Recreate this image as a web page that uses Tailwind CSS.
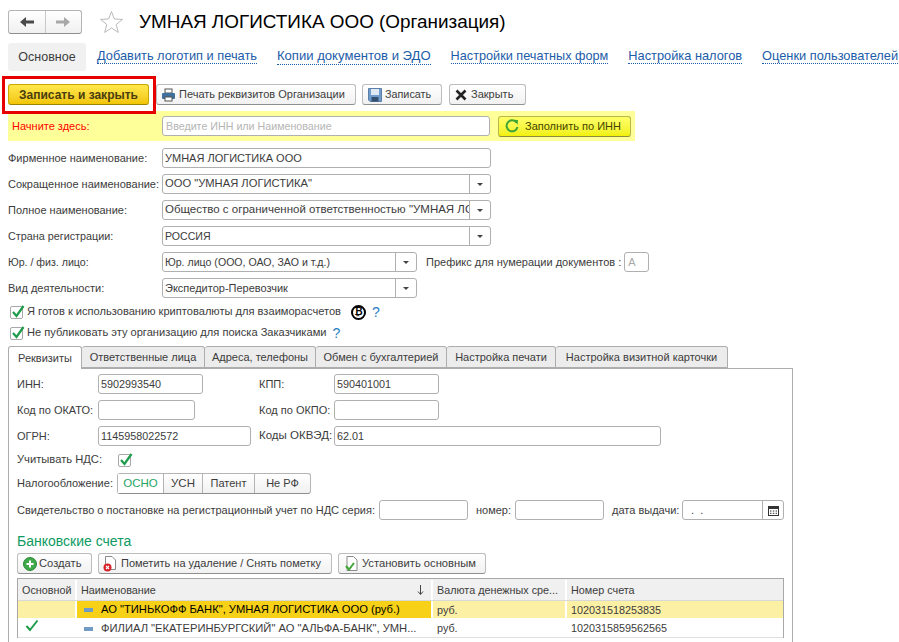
<!DOCTYPE html>
<html lang="ru">
<head>
<meta charset="utf-8">
<script src="https://cdn.jsdelivr.net/npm/@tailwindcss/browser@4"></script>
</head>
<body class="bg-white">
<div class="relative w-[899px] h-[642px] overflow-hidden bg-white font-['Liberation_Sans',Arial,sans-serif] text-[11px] leading-none text-[#3c3c3c]">

  <!-- Title bar -->
  <div class="flex items-center h-[43px] pl-[8px] pt-[1px]">
    <div class="flex w-[74px] h-[24px] rounded-[3px] border border-[#b4b4b4] border-b-[#8f8f8f] bg-gradient-to-b from-white to-[#f0f0f0]">
      <div class="flex-1 flex items-center justify-center border-r border-[#c8c8c8]">
        <svg width="16" height="12" viewBox="0 0 16 12"><path d="M1 6 L7 1 V4.5 H15 V7.5 H7 V11 Z" fill="#4a4a4a"/></svg>
      </div>
      <div class="flex-1 flex items-center justify-center">
        <svg width="16" height="12" viewBox="0 0 16 12"><path d="M15 6 L9 1 V4.5 H1 V7.5 H9 V11 Z" fill="#a8a8a8"/></svg>
      </div>
    </div>
    <svg class="ml-[17px] shrink-0" width="25" height="24" viewBox="0 0 25 24"><path d="M12.5 1.5 L15.4 9 L23.5 9.4 L17.2 14.5 L19.3 22.4 L12.5 18 L5.7 22.4 L7.8 14.5 L1.5 9.4 L9.6 9 Z" fill="#fff" stroke="#b9b9b9" stroke-width="1"/></svg>
    <div class="ml-[15px] text-[18.9px] text-black whitespace-nowrap">УМНАЯ ЛОГИСТИКА ООО (Организация)</div>
  </div>

  <!-- Section tabs -->
  <div class="flex items-center h-[28px] pl-[8px] text-[12.8px] whitespace-nowrap">
    <div class="flex items-center justify-center w-[78px] h-[28px] rounded-[3px] bg-[#f1f1f1] text-[12.5px] text-[#3c3c3c]">Основное</div>
    <a class="ml-[11px] text-[#1c5ca8] border-b border-dotted border-[#1c5ca8] pb-[1px]">Добавить логотип и печать</a>
    <a class="ml-[20px] text-[13.1px] text-[#1c5ca8] border-b border-dotted border-[#1c5ca8] pb-[1px]">Копии документов и ЭДО</a>
    <a class="ml-[20px] text-[12.7px] text-[#1c5ca8] border-b border-dotted border-[#1c5ca8] pb-[1px]">Настройки печатных форм</a>
    <a class="ml-[20px] text-[#1c5ca8] border-b border-dotted border-[#1c5ca8] pb-[1px]">Настройка налогов</a>
    <a class="ml-[20px] text-[#1c5ca8] border-b border-dotted border-[#1c5ca8] pb-[1px]">Оценки пользователей</a>
  </div>

  <!-- Command bar -->
  <div class="flex items-center h-[21px] mt-[13px] ml-[8px]">
    <button class="flex items-center justify-center w-[141px] h-[21px] rounded-[3px] border border-[#c9a800] border-b-[#9c8500] bg-gradient-to-b from-[#ffe84a] to-[#f2c500] font-bold text-[#4a3d10] text-[12px]">Записать и закрыть</button>
    <button class="flex items-center gap-[3px] ml-[7px] w-[200px] h-[21px] pl-[4px] rounded-[3px] border border-[#bcbcbc] border-b-[#8f8f8f] bg-gradient-to-b from-white to-[#f1f1f1] whitespace-nowrap">
      <svg width="15" height="14" viewBox="0 0 15 14"><rect x="4" y="1" width="7" height="4" fill="#fff" stroke="#555"/><rect x="1" y="5" width="13" height="6" rx="1" fill="#3f6f9c"/><rect x="4" y="9" width="7" height="4" fill="#fff" stroke="#555"/></svg>
      <span>Печать реквизитов Организации</span>
    </button>
    <button class="flex items-center gap-[3px] ml-[6px] w-[80px] h-[21px] pl-[5px] rounded-[3px] border border-[#bcbcbc] border-b-[#8f8f8f] bg-gradient-to-b from-white to-[#f1f1f1]">
      <svg width="14" height="14" viewBox="0 0 14 14"><path d="M0.5 0.5 H13.5 V13.5 H2 L0.5 12 Z" fill="#6f9ccb" stroke="#5b7fa6"/><rect x="3" y="1" width="8" height="6" fill="#dfe9f3"/><rect x="3.5" y="9" width="7" height="4.5" fill="#33506f"/></svg>
      <span class="text-[10.8px]">Записать</span>
    </button>
    <button class="flex items-center gap-[4px] ml-[7px] w-[77px] h-[21px] pl-[5px] rounded-[3px] border border-[#bcbcbc] border-b-[#8f8f8f] bg-gradient-to-b from-white to-[#f1f1f1]">
      <svg width="12" height="12" viewBox="0 0 12 12"><path d="M1.5 1.5 L10.5 10.5 M10.5 1.5 L1.5 10.5" stroke="#222" stroke-width="2.6"/></svg>
      <span>Закрыть</span>
    </button>
  </div>

  <!-- Red highlight -->
  <div class="absolute left-[2px] top-[76px] w-[154px] h-[38px] border-[3px] border-[#e60000]"></div>

  <!-- Yellow strip -->
  <div class="flex items-center h-[30px] w-[627px] mt-[6px] ml-[8px] bg-[#ffff99]">
    <span class="w-[154px] pl-[4px] text-[#ff0000]">Начните здесь:</span>
    <div class="flex items-center w-[328px] h-[20px] px-[3px] rounded-[3px] border border-[#b0b0b0] bg-white text-[10.7px] text-[#b5b5b5]">Введите ИНН или Наименование</div>
    <button class="flex items-center gap-[6px] ml-[8px] w-[133px] h-[21px] pl-[6px] rounded-[3px] border border-[#b8b84a] border-b-[#8d8d3a] bg-gradient-to-b from-[#ffff66] to-[#f1f100] text-[#444400]">
      <svg width="14" height="14" viewBox="0 0 14 14"><path d="M11.5 3.5 A5.5 5.5 0 1 0 12.5 8" fill="none" stroke="#3fa535" stroke-width="2"/><path d="M8.5 0.8 L13 1 L12.6 5.8 Z" fill="#3fa535"/></svg>
      <span>Заполнить по ИНН</span>
    </button>
  </div>

  <!-- Main fields -->
  <div class="flex flex-col gap-[6px] mt-[7px] pl-[8px]">
    <div class="flex items-center h-[20px]">
      <span class="w-[154px] shrink-0">Фирменное наименование:</span>
      <div class="flex items-center w-[329px] h-[20px] px-[2px] rounded-[3px] border border-[#b0b0b0]">УМНАЯ ЛОГИСТИКА ООО</div>
    </div>
    <div class="flex items-center h-[20px]">
      <span class="w-[154px] shrink-0 whitespace-nowrap">Сокращенное наименование:</span>
      <div class="flex w-[329px] h-[20px] rounded-[3px] border border-[#b0b0b0]">
        <div class="flex-1 flex items-center px-[2px] text-[11.2px]">ООО "УМНАЯ ЛОГИСТИКА"</div>
        <div class="flex items-center justify-center w-[21px] border-l border-[#b0b0b0]"><svg width="6" height="3" viewBox="0 0 6 3"><path d="M0 0 H6 L3 3 Z" fill="#444"/></svg></div>
      </div>
    </div>
    <div class="flex items-center h-[20px]">
      <span class="w-[154px] shrink-0">Полное наименование:</span>
      <div class="flex w-[329px] h-[20px] rounded-[3px] border border-[#b0b0b0]">
        <div class="flex-1 min-w-0 flex items-center px-[2px] overflow-hidden whitespace-nowrap text-[11.5px]">Общество с ограниченной ответственностью "УМНАЯ ЛОГИСТИКА"</div>
        <div class="flex items-center justify-center w-[21px] shrink-0 border-l border-[#b0b0b0]"><svg width="6" height="3" viewBox="0 0 6 3"><path d="M0 0 H6 L3 3 Z" fill="#444"/></svg></div>
      </div>
    </div>
    <div class="flex items-center h-[20px]">
      <span class="w-[154px] shrink-0 text-[10.8px]">Страна регистрации:</span>
      <div class="flex w-[329px] h-[20px] rounded-[3px] border border-[#b0b0b0]">
        <div class="flex-1 flex items-center px-[2px] text-[10.6px]">РОССИЯ</div>
        <div class="flex items-center justify-center w-[21px] border-l border-[#b0b0b0]"><svg width="6" height="3" viewBox="0 0 6 3"><path d="M0 0 H6 L3 3 Z" fill="#444"/></svg></div>
      </div>
    </div>
    <div class="flex items-center h-[20px]">
      <span class="w-[154px] shrink-0 text-[10.6px]">Юр. / физ. лицо:</span>
      <div class="flex w-[255px] h-[20px] rounded-[3px] border border-[#b0b0b0]">
        <div class="flex-1 flex items-center px-[2px] text-[10.6px]">Юр. лицо (ООО, ОАО, ЗАО и т.д.)</div>
        <div class="flex items-center justify-center w-[21px] border-l border-[#b0b0b0]"><svg width="6" height="3" viewBox="0 0 6 3"><path d="M0 0 H6 L3 3 Z" fill="#444"/></svg></div>
      </div>
      <span class="ml-[9px] whitespace-nowrap">Префикс для нумерации документов :</span>
      <div class="flex items-center ml-[3px] w-[25px] h-[20px] px-[3px] rounded-[3px] border border-[#b0b0b0] text-[#a8a8a8]">А</div>
    </div>
    <div class="flex items-center h-[20px]">
      <span class="w-[154px] shrink-0">Вид деятельности:</span>
      <div class="flex w-[255px] h-[20px] rounded-[3px] border border-[#b0b0b0]">
        <div class="flex-1 flex items-center px-[2px]">Экспедитор-Перевозчик</div>
        <div class="flex items-center justify-center w-[21px] border-l border-[#b0b0b0]"><svg width="6" height="3" viewBox="0 0 6 3"><path d="M0 0 H6 L3 3 Z" fill="#444"/></svg></div>
      </div>
    </div>
  </div>

  <!-- Checkboxes -->
  <div class="flex items-center h-[16px] mt-[6px] pl-[10px]">
    <div class="relative w-[13px] h-[13px] rounded-[2px] border border-[#a8a8a8]">
      <svg class="absolute left-[0px] top-[-3px]" width="14" height="15" viewBox="0 0 14 15"><path d="M2 8 L5.5 12 L12.5 2" fill="none" stroke="#1d9b4a" stroke-width="2.2"/></svg>
    </div>
    <span class="ml-[4px] text-[11.1px]">Я готов к использованию криптовалюты для взаиморасчетов</span>
    <div class="flex items-center justify-center ml-[10px] w-[15px] h-[15px] rounded-full border-2 border-black text-[10px] font-bold text-black">₿</div>
    <span class="ml-[6px] text-[14px] text-[#2a7fc4]">?</span>
  </div>
  <div class="flex items-center h-[16px] mt-[5px] pl-[10px]">
    <div class="relative w-[13px] h-[13px] rounded-[2px] border border-[#a8a8a8]">
      <svg class="absolute left-[0px] top-[-3px]" width="14" height="15" viewBox="0 0 14 15"><path d="M2 8 L5.5 12 L12.5 2" fill="none" stroke="#1d9b4a" stroke-width="2.2"/></svg>
    </div>
    <span class="ml-[4px] text-[11.1px]">Не публиковать эту организацию для поиска Заказчиками</span>
    <span class="ml-[6px] text-[14px] text-[#2a7fc4]">?</span>
  </div>

  <!-- Inner tabs -->
  <div class="flex items-end h-[23px] mt-[4px] ml-[8px] whitespace-nowrap">
    <div class="relative z-10 flex items-center justify-center w-[74px] h-[23px] -mb-[1px] rounded-t-[3px] border border-b-0 border-[#adadad] bg-white">Реквизиты</div>
    <div class="flex items-center justify-center w-[123px] h-[22px] rounded-t-[3px] border border-l-0 border-[#adadad] bg-[#ececec]">Ответственные лица</div>
    <div class="flex items-center justify-center w-[111px] h-[22px] rounded-t-[3px] border border-l-0 border-[#adadad] bg-[#ececec]">Адреса, телефоны</div>
    <div class="flex items-center justify-center w-[131px] h-[22px] rounded-t-[3px] border border-l-0 border-[#adadad] bg-[#ececec]">Обмен с бухгалтерией</div>
    <div class="flex items-center justify-center w-[109px] h-[22px] rounded-t-[3px] border border-l-0 border-[#adadad] bg-[#ececec]">Настройка печати</div>
    <div class="flex items-center justify-center w-[172px] h-[22px] rounded-t-[3px] border border-l-0 border-[#adadad] bg-[#ececec]">Настройка визитной карточки</div>
  </div>

  <!-- Panel -->
  <div class="ml-[8px] w-[785px] h-[300px] border border-b-0 border-[#adadad] pl-[8px] pt-[5px]">
    <div class="flex flex-col gap-[6px]">
      <div class="flex items-center h-[20px]">
        <span class="w-[81px]">ИНН:</span>
        <div class="flex items-center w-[105px] h-[20px] px-[2px] rounded-[3px] border border-[#b0b0b0] text-[10.8px]">5902993540</div>
        <span class="ml-[56px] w-[75px]">КПП:</span>
        <div class="flex items-center w-[105px] h-[20px] px-[2px] rounded-[3px] border border-[#b0b0b0] text-[10.8px]">590401001</div>
      </div>
      <div class="flex items-center h-[20px]">
        <span class="w-[81px] whitespace-nowrap">Код по ОКАТО:</span>
        <div class="w-[97px] h-[20px] rounded-[3px] border border-[#b0b0b0]"></div>
        <span class="ml-[64px] w-[75px] whitespace-nowrap">Код по ОКПО:</span>
        <div class="w-[105px] h-[20px] rounded-[3px] border border-[#b0b0b0]"></div>
      </div>
      <div class="flex items-center h-[20px]">
        <span class="w-[81px]">ОГРН:</span>
        <div class="flex items-center w-[153px] h-[20px] px-[2px] rounded-[3px] border border-[#b0b0b0] text-[10.8px]">1145958022572</div>
        <span class="ml-[8px] w-[75px] whitespace-nowrap text-[11.5px]">Коды ОКВЭД:</span>
        <div class="flex items-center w-[327px] h-[20px] px-[2px] rounded-[3px] border border-[#b0b0b0] text-[10.8px]">62.01</div>
      </div>
    </div>
    <div class="flex items-center h-[16px] mt-[6px]">
      <span class="w-[101px] text-[11.2px]">Учитывать НДС:</span>
      <div class="relative w-[13px] h-[13px] rounded-[2px] border border-[#a8a8a8]">
        <svg class="absolute left-[0px] top-[-3px]" width="14" height="15" viewBox="0 0 14 15"><path d="M2 8 L5.5 12 L12.5 2" fill="none" stroke="#1d9b4a" stroke-width="2.2"/></svg>
      </div>
    </div>
    <div class="flex items-center h-[21px] mt-[5px]">
      <span class="w-[100px]">Налогообложение:</span>
      <div class="flex h-[21px] rounded-[3px] border border-[#b4b4b4] border-b-[#8f8f8f] bg-gradient-to-b from-white to-[#f1f1f1]">
        <div class="flex items-center justify-center w-[46px] bg-white text-[11.5px] text-[#1fa463] border-r border-[#b4b4b4]">ОСНО</div>
        <div class="flex items-center justify-center w-[39px] text-[11.5px] border-r border-[#b4b4b4]">УСН</div>
        <div class="flex items-center justify-center w-[52px] border-r border-[#b4b4b4]">Патент</div>
        <div class="flex items-center justify-center w-[55px]">Не РФ</div>
      </div>
    </div>
    <div class="flex items-center h-[20px] mt-[6px]">
      <span class="w-[362px] whitespace-nowrap">Свидетельство о постановке на регистрационный учет по НДС серия:</span>
      <div class="w-[89px] h-[20px] rounded-[3px] border border-[#b0b0b0]"></div>
      <span class="ml-[8px] w-[39px]">номер:</span>
      <div class="w-[89px] h-[20px] rounded-[3px] border border-[#b0b0b0]"></div>
      <span class="ml-[8px] w-[70px] whitespace-nowrap">дата выдачи:</span>
      <div class="flex w-[102px] h-[20px] rounded-[3px] border border-[#b0b0b0]">
        <div class="flex-1 flex items-center pl-[8px]">. &nbsp;.</div>
        <div class="flex items-center justify-center w-[21px] border-l border-[#b0b0b0]">
          <svg width="11" height="11" viewBox="0 0 11 11"><rect x="0.5" y="1.5" width="10" height="9" fill="#fff" stroke="#333"/><rect x="0.5" y="1.5" width="10" height="2.5" fill="#333"/><path d="M2 6 H3.5 M4.8 6 H6.3 M7.6 6 H9 M2 8.3 H3.5 M4.8 8.3 H6.3 M7.6 8.3 H9" stroke="#333"/></svg>
        </div>
      </div>
    </div>

    <div class="h-[14px] mt-[14px] text-[14px] text-[#0e9a63]">Банковские счета</div>

    <div class="flex items-center h-[21px] mt-[5px] whitespace-nowrap">
      <button class="flex items-center gap-[2px] w-[75px] h-[21px] pl-[5px] rounded-[3px] border border-[#bcbcbc] border-b-[#8f8f8f] bg-gradient-to-b from-white to-[#f1f1f1]">
        <svg width="14" height="14" viewBox="0 0 14 14"><circle cx="7" cy="7" r="6.5" fill="#3fa84a" stroke="#2d8a38"/><path d="M7 3.5 V10.5 M3.5 7 H10.5" stroke="#fff" stroke-width="2"/></svg>
        <span class="text-[11.2px]">Создать</span>
      </button>
      <button class="flex items-center gap-[4px] ml-[6px] w-[234px] h-[21px] pl-[4px] rounded-[3px] border border-[#bcbcbc] border-b-[#8f8f8f] bg-gradient-to-b from-white to-[#f1f1f1]">
        <svg width="14" height="16" viewBox="0 0 14 16"><path d="M2.5 0.5 H9 L12.5 4 V13.5 H2.5 Z" fill="#fff" stroke="#8a8a8a"/><circle cx="4.5" cy="11.5" r="4" fill="#d8232a"/><path d="M3 10 L6 13 M6 10 L3 13" stroke="#fff" stroke-width="1.1"/></svg>
        <span>Пометить на удаление / Снять пометку</span>
      </button>
      <button class="flex items-center gap-[4px] ml-[6px] w-[148px] h-[21px] pl-[6px] rounded-[3px] border border-[#bcbcbc] border-b-[#8f8f8f] bg-gradient-to-b from-white to-[#f1f1f1]">
        <svg width="13" height="15" viewBox="0 0 13 15"><path d="M2 0.5 H8.5 L12 4 V14.5 H2 Z" fill="#fff" stroke="#8a8a8a"/><path d="M1 10 L4 13.5 L9 7" fill="none" stroke="#3fa535" stroke-width="2"/></svg>
        <span class="text-[11.2px]">Установить основным</span>
      </button>
    </div>

    <!-- Table -->
    <div class="w-[767px] mt-[4px] border border-b-0 border-[#a8a8a8] text-[10.8px]">
      <div class="flex h-[22px] pt-[1px] bg-[#f0f0f0] border-b border-[#d8d8d8]">
        <div class="flex items-center w-[59px] pl-[4px] border-r-2 border-white">Основной</div>
        <div class="flex items-center justify-between w-[356px] px-[4px] border-r-2 border-white">
          <span>Наименование</span>
          <svg class="mr-[3px]" width="7" height="10" viewBox="0 0 7 10"><path d="M3.5 0 V9 M1 6.5 L3.5 9.5 L6 6.5" fill="none" stroke="#444"/></svg>
        </div>
        <div class="flex items-center w-[134px] px-[4px] border-r-2 border-white whitespace-nowrap overflow-hidden">Валюта денежных сре...</div>
        <div class="flex items-center flex-1 pl-[4px]">Номер счета</div>
      </div>
      <div class="flex h-[18px] bg-[#fcf0a5] border-b border-white">
        <div class="w-[59px] border-r-2 border-white"></div>
        <div class="flex items-center w-[356px] pl-[7px] pt-[1px] bg-[#f7d117] text-black border-r-2 border-white whitespace-nowrap">
          <span class="w-[9px] h-[4px] bg-[#6f9bc4]"></span>
          <span class="ml-[8px] text-[11.2px]">АО "ТИНЬКОФФ БАНК", УМНАЯ ЛОГИСТИКА ООО (руб.)</span>
        </div>
        <div class="flex items-center w-[134px] pl-[4px] pt-[1px] border-r-2 border-white">руб.</div>
        <div class="flex items-center flex-1 pl-[4px] pt-[1px]">102031518253835</div>
      </div>
      <div class="flex h-[19px] border-b border-[#e0e0e0]">
        <div class="flex items-center w-[59px] pl-[7px] border-r-2 border-white">
          <svg class="-mt-[5px]" width="14" height="13" viewBox="0 0 14 13"><path d="M1.5 7 L5 11 L12.5 1.5" fill="none" stroke="#1d9b4a" stroke-width="2"/></svg>
        </div>
        <div class="flex items-center w-[356px] pl-[7px] pt-[1px] border-r-2 border-white whitespace-nowrap overflow-hidden">
          <span class="w-[9px] h-[4px] bg-[#6f9bc4] shrink-0"></span>
          <span class="ml-[8px] text-[11.2px]">ФИЛИАЛ "ЕКАТЕРИНБУРГСКИЙ" АО "АЛЬФА-БАНК", УМН...</span>
        </div>
        <div class="flex items-center w-[134px] pl-[4px] pt-[1px] border-r-2 border-white">руб.</div>
        <div class="flex items-center flex-1 pl-[4px] pt-[1px]">1020315859562565</div>
      </div>
    </div>
  </div>
</div>
</body>
</html>
